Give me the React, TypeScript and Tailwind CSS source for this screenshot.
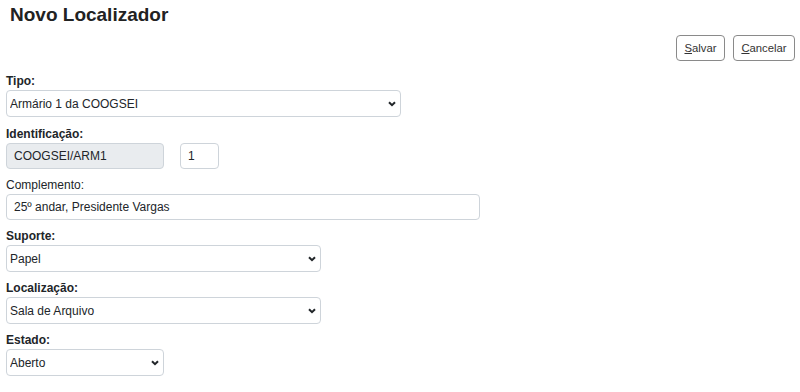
import React from "react";

const font = { fontFamily: '"Liberation Sans", Arial, sans-serif' };

function Chevron() {
  return (
    <svg
      className="pointer-events-none absolute right-[5px] top-1/2 -translate-y-1/2"
      width="8"
      height="6"
      viewBox="0 0 8 6"
    >
      <path d="M1 1.2 L4 4.2 L7 1.2" fill="none" stroke="#212529" strokeWidth="2" />
    </svg>
  );
}

function SelectBox({ value, width }: { value: string; width: string }) {
  return (
    <div className={`relative ${width}`}>
      <select
        defaultValue={value}
        className="h-[27px] w-full appearance-none rounded-[4px] border border-[#ced4da] bg-white pl-[3px] pr-6 text-[12px] text-[#212529] outline-none"
        style={font}
      >
        <option>{value}</option>
      </select>
      <Chevron />
    </div>
  );
}

function Label({ children, bold = true }: { children: React.ReactNode; bold?: boolean }) {
  return (
    <label
      className={`mb-[1px] block text-[12px] leading-[16px] text-[#212529] ${bold ? "font-bold" : "font-normal"}`}
    >
      {children}
    </label>
  );
}

export default function App() {
  return (
    <div className="min-h-[392px] w-[800px] bg-white" style={font}>
      <h1 className="pl-[10px] pt-[4px] text-[19px] font-bold leading-[22px] text-[#222]">
        Novo Localizador
      </h1>

      <div className="mt-[9px] flex justify-end gap-[8px] pr-[5px]">
        <button className="h-[26px] w-[49px] rounded-[4px] border border-[#8a8a8a] bg-white text-[11.3px] text-[#333]">
          <span className="underline">S</span>alvar
        </button>
        <button className="h-[26px] w-[62px] rounded-[4px] border border-[#8a8a8a] bg-white text-[11.3px] text-[#333]">
          <span className="underline">C</span>ancelar
        </button>
      </div>

      <form className="mt-[12px] px-[6px]">
        <div className="mb-[9px]">
          <Label>Tipo:</Label>
          <SelectBox value="Armário 1 da COOGSEI" width="w-[395px]" />
        </div>

        <div className="mb-[8px]">
          <Label>Identificação:</Label>
          <div className="flex gap-[16px]">
            <input
              readOnly
              value="COOGSEI/ARM1"
              className="h-[26px] w-[158px] rounded-[4px] border border-[#ced4da] bg-[#e9ecef] px-[7px] text-[12px] text-[#212529] outline-none"
              style={font}
            />
            <input
              readOnly
              value="1"
              className="h-[26px] w-[39px] rounded-[4px] border border-[#ced4da] bg-white px-[7px] text-[12px] text-[#212529] outline-none"
              style={font}
            />
          </div>
        </div>

        <div className="mb-[8px]">
          <Label bold={false}>Complemento:</Label>
          <input
            readOnly
            value="25º andar, Presidente Vargas"
            className="h-[26px] w-[474px] rounded-[4px] border border-[#ced4da] bg-white px-[7px] text-[12px] text-[#212529] outline-none"
            style={font}
          />
        </div>

        <div className="mb-[8px]">
          <Label>Suporte:</Label>
          <SelectBox value="Papel" width="w-[315px]" />
        </div>

        <div className="mb-[8px]">
          <Label>Localização:</Label>
          <SelectBox value="Sala de Arquivo" width="w-[315px]" />
        </div>

        <div>
          <Label>Estado:</Label>
          <SelectBox value="Aberto" width="w-[158px]" />
        </div>
      </form>
    </div>
  );
}
